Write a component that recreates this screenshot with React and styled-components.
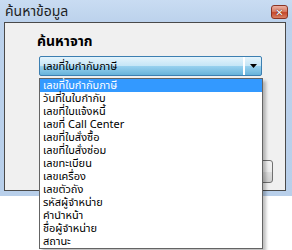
import React from 'react'
import styled, { createGlobalStyle } from 'styled-components'

const GlobalStyle = createGlobalStyle`
  body {
    margin: 0;
    background: #fff;
    font-family: Tahoma, "Noto Sans Thai", "Noto Sans", sans-serif;
    font-size: 11px;
  }
`

const Page = styled.div`
  position: relative;
  width: 292px;
  height: 250px;
  overflow: hidden;
`

const Window = styled.div`
  width: 292px;
  height: 196px;
  box-sizing: border-box;
  padding: 0 6px 5px 4px;
  background: linear-gradient(180deg, #c9dcf2 0px, #bcd2ec 22px, #b8cfea 100%);
  display: flex;
  flex-direction: column;
`

const TitleBar = styled.div`
  height: 22px;
  display: flex;
  align-items: center;
  justify-content: space-between;
  margin-left: -4px;
  padding: 0 0 0 5px;
`

const Title = styled.span`
  font-size: 14px;
  color: #1e1e1e;
`

const CloseButton = styled.div`
  width: 17px;
  height: 14px;
  margin-right: -2px;
  margin-top: 2px;
  box-sizing: border-box;
  border: 1px solid #8a3324;
  border-radius: 3px;
  background: linear-gradient(180deg, #eab0a2 0%, #d77b64 45%, #c6482c 55%, #d98064 100%);
  display: flex;
  align-items: center;
  justify-content: center;
  color: #fff;
  font-size: 10px;
  font-weight: bold;
  font-family: "DejaVu Sans", sans-serif;
  text-shadow: 0 0 1px #5a1a10, 0 0 1px #5a1a10;
`

const Client = styled.div`
  flex: 1;
  border: 1px solid #4a4a4a;
  background: #f0f0f0;
  display: flex;
  flex-direction: column;
  padding: 8px 22px 0 32px;
`

const Label = styled.div`
  font-weight: bold;
  font-size: 14px;
  color: #000;
  height: 25px;
`

const Combo = styled.div`
  width: 223px;
  height: 20px;
  box-sizing: border-box;
  margin-left: 2px;
  border: 1px solid #3c7fb1;
  border-radius: 2px;
  background: linear-gradient(180deg, #e5f4fc 0%, #c4e5f6 50%, #98d1ef 50%, #68b3db 100%);
  display: flex;
  align-items: stretch;
`

const ComboText = styled.div`
  flex: 1;
  padding-left: 3px;
  display: flex;
  align-items: center;
  color: #000;
`

const ComboArrow = styled.div`
  width: 16px;
  border-left: 2px solid #fff;
  display: flex;
  align-items: center;
  justify-content: center;
`

const Button = styled.div`
  align-self: flex-end;
  margin-top: 84px;
  margin-right: -10px;
  width: 75px;
  height: 23px;
  box-sizing: border-box;
  border: 1px solid #707070;
  border-radius: 3px;
  background: linear-gradient(180deg, #f2f2f2 0%, #ebebeb 50%, #dddddd 50%, #cfcfcf 100%);
`

const DropList = styled.ul`
  position: absolute;
  left: 39px;
  top: 78px;
  width: 224px;
  margin: 0;
  padding: 0;
  list-style: none;
  box-sizing: border-box;
  border: 1px solid #646464;
  background: #fff;
  box-shadow: 3px 3px 3px rgba(0, 0, 0, 0.25);
`

const Item = styled.li`
  height: 13px;
  line-height: 13px;
  padding-left: 3px;
  white-space: nowrap;
  color: ${(p) => (p.active ? '#fff' : '#000')};
  background: ${(p) => (p.active ? '#3399ff' : 'transparent')};
`

const options = [
  'เลขที่ใบกำกับภาษี',
  'วันที่ในใบกำกับ',
  'เลขที่ใบแจ้งหนี้',
  'เลขที่ Call Center',
  'เลขที่ใบสั่งซื้อ',
  'เลขที่ใบสั่งซ่อม',
  'เลขทะเบียน',
  'เลขเครื่อง',
  'เลขตัวถัง',
  'รหัสผู้จำหน่าย',
  'คำนำหน้า',
  'ชื่อผู้จำหน่าย',
  'สถานะ',
]

const App = () => {
  return (
    <Page>
      <GlobalStyle />
      <Window>
        <TitleBar>
          <Title>ค้นหาข้อมูล</Title>
          <CloseButton>✕</CloseButton>
        </TitleBar>
        <Client>
          <Label>ค้นหาจาก</Label>
          <Combo>
            <ComboText>{options[0]}</ComboText>
            <ComboArrow>
              <svg width="7" height="4" viewBox="0 0 7 4">
                <path d="M0 0h7L3.5 4z" fill="#000" />
              </svg>
            </ComboArrow>
          </Combo>
          <Button />
        </Client>
      </Window>
      <DropList>
        {options.map((o, i) => (
          <Item key={o} active={i === 0}>
            {o}
          </Item>
        ))}
      </DropList>
    </Page>
  )
}

export default App
